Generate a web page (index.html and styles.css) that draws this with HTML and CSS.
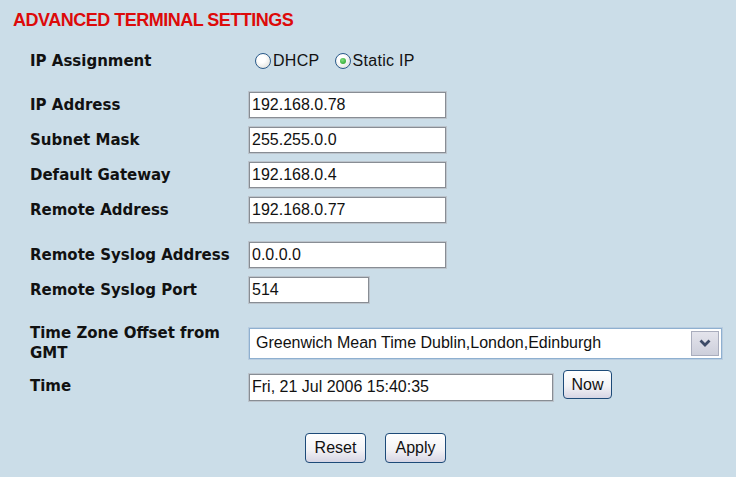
FILE: index.html
```html
<!DOCTYPE html>
<html lang="en">
<head>
    <meta charset="UTF-8">
    <title>Advanced Terminal Settings</title>
    <link rel="stylesheet" href="styles.css">
</head>
<body>
    <h1 class="title">ADVANCED TERMINAL SETTINGS</h1>
    <form class="settings">
        <div class="row row-assign">
            <label class="label">IP Assignment</label>
            <div class="radios">
                <span class="radio"><span class="dot"></span>DHCP</span>
                <span class="radio checked"><span class="dot"></span>Static IP</span>
            </div>
        </div>

        <div class="row row-first">
            <label class="label">IP Address</label>
            <input class="field" type="text" value="192.168.0.78">
        </div>
        <div class="row">
            <label class="label">Subnet Mask</label>
            <input class="field" type="text" value="255.255.0.0">
        </div>
        <div class="row">
            <label class="label">Default Gateway</label>
            <input class="field" type="text" value="192.168.0.4">
        </div>
        <div class="row">
            <label class="label">Remote Address</label>
            <input class="field" type="text" value="192.168.0.77">
        </div>

        <div class="row row-section">
            <label class="label">Remote Syslog Address</label>
            <input class="field" type="text" value="0.0.0.0">
        </div>
        <div class="row">
            <label class="label">Remote Syslog Port</label>
            <input class="field field-short" type="text" value="514">
        </div>

        <div class="row row-zone">
            <label class="label label-wrap">Time Zone Offset from GMT</label>
            <div class="select">
                <span class="select-value">Greenwich Mean Time Dublin,London,Edinburgh</span>
                <span class="select-arrow">
                    <svg width="12" height="8" viewBox="0 0 12 8"><polyline points="1.5,1.5 6,6 10.5,1.5" fill="none" stroke="#3c4a66" stroke-width="2.8"/></svg>
                </span>
            </div>
        </div>
        <div class="row row-time">
            <label class="label">Time</label>
            <input class="field field-time" type="text" value="Fri, 21 Jul 2006 15:40:35">
            <button class="btn btn-now" type="button">Now</button>
        </div>

        <div class="actions">
            <button class="btn" type="reset">Reset</button>
            <button class="btn" type="button">Apply</button>
        </div>
    </form>
</body>
</html>
```

FILE: styles.css
```css
body {
    margin: 0;
    background-color: #cbdde8;
    font-family: "Liberation Sans", Arial, sans-serif;
    height: 477px;
    overflow: hidden;
}
.title {
    margin: 9px 0 0 13px;
    font-size: 18px;
    line-height: 22px;
    font-weight: bold;
    letter-spacing: -0.5px;
    color: #dd0a0a;
}
.settings {
    padding-left: 30px;
}
.row {
    display: flex;
    align-items: center;
    min-height: 26px;
    margin-top: 9px;
}
.row-assign {
    margin-top: 17px;
}
.row-first {
    margin-top: 18px;
}
.row-section {
    margin-top: 19px;
}
.row-zone {
    margin-top: 20px;
    min-height: 40px;
}
.row-time {
    margin-top: 7px;
}
.label {
    width: 219px;
    flex: none;
    font-family: "DejaVu Sans", Verdana, sans-serif;
    font-weight: bold;
    font-size: 15px;
    color: #111;
}
.label-wrap {
    width: 205px;
    padding-right: 14px;
    line-height: 20px;
}
.radios {
    display: flex;
    gap: 15px;
    padding-left: 6px;
}
.radio {
    display: flex;
    align-items: center;
    gap: 2px;
    font-size: 16px;
    letter-spacing: 0.3px;
    color: #111;
}
.dot {
    width: 14px;
    height: 14px;
    border: 1px solid #2a5a8a;
    border-radius: 50%;
    background: radial-gradient(circle at 40% 35%, #ffffff 30%, #d8d8d2 100%);
    display: flex;
    align-items: center;
    justify-content: center;
}
.checked .dot::after {
    content: "";
    width: 6px;
    height: 6px;
    border-radius: 50%;
    background: radial-gradient(circle at 40% 35%, #7fe07f, #1f9a1f);
}
.field {
    box-sizing: border-box;
    width: 197px;
    height: 26px;
    margin: 0;
    padding: 0 2px;
    border: 1px solid #888d94;
    box-shadow: 0 0 0 1px #bcc4cc;
    background: #fff;
    font-family: "Liberation Sans", Arial, sans-serif;
    font-size: 16px;
    color: #111;
}
.field-short {
    width: 120px;
}
.field-time {
    width: 304px;
    height: 27px;
    margin-top: 3px;
}
.select {
    box-sizing: border-box;
    width: 473px;
    height: 31px;
    display: flex;
    align-items: center;
    border: 1px solid #8fb0d0;
    box-shadow: 0 0 0 1px #b9cde0;
    background: #fff;
    padding: 0 2px 0 6px;
}
.select-value {
    flex: 1;
    font-size: 16px;
    color: #111;
}
.select-arrow {
    width: 28px;
    height: 25px;
    box-sizing: border-box;
    border: 1px solid #a9adbd;
    background: linear-gradient(#e4e4ec, #cdcfdb);
    display: flex;
    align-items: center;
    justify-content: center;
}
.btn {
    box-sizing: border-box;
    height: 30px;
    width: 61px;
    padding: 0;
    border: 1px solid #1d4a78;
    border-radius: 4px;
    background: linear-gradient(#ffffff 0%, #f3f3f6 55%, #d6d5e4 100%);
    font-family: "Liberation Sans", Arial, sans-serif;
    font-size: 16px;
    color: #111;
}
.btn-now {
    width: 49px;
    height: 29px;
    margin-left: 10px;
    margin-bottom: 2px;
}
.actions {
    display: flex;
    gap: 19px;
    margin-top: 32px;
    padding-left: 275px;
}
```
